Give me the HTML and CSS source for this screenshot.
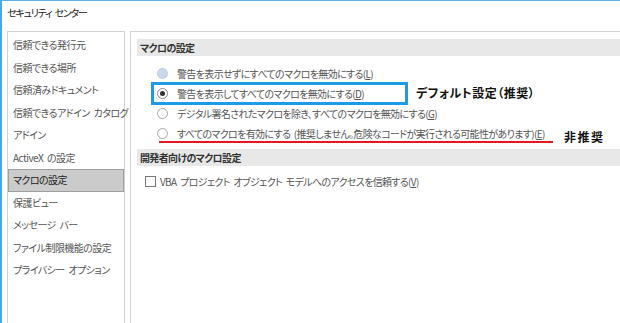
FILE: index.html
```html
<!DOCTYPE html>
<html lang="ja">
<head>
  <meta charset="UTF-8" />
  <title>セキュリティ センター</title>
  <link rel="stylesheet" href="styles.css">
</head>
<body>
  <div class="window">
    <div class="title">セキュリティ センター</div>
    <div class="content">
      <ul class="nav">
        <li>信頼できる発行元</li>
        <li>信頼できる場所</li>
        <li>信頼済みドキュメント</li>
        <li>信頼できるアドイン カタログ</li>
        <li>アドイン</li>
        <li>ActiveX の設定</li>
        <li class="selected">マクロの設定</li>
        <li>保護ビュー</li>
        <li>メッセージ バー</li>
        <li>ファイル制限機能の設定</li>
        <li>プライバシー オプション</li>
      </ul>
      <div class="main">
        <div class="section-head">マクロの設定</div>
        <div class="options">
          <div class="option"><span class="radio disabled"></span><span>警告を表示せずにすべてのマクロを無効にする(<u>L</u>)</span></div>
          <div class="option"><span class="radio checked"></span><span>警告を表示してすべてのマクロを無効にする(<u>D</u>)</span></div>
          <div class="option"><span class="radio"></span><span>デジタル署名されたマクロを除き、すべてのマクロを無効にする(<u>G</u>)</span></div>
          <div class="option"><span class="radio"></span><span>すべてのマクロを有効にする (推奨しません。危険なコードが実行される可能性があります)(<u>E</u>)</span></div>
        </div>
        <div class="section-head second">開発者向けのマクロ設定</div>
        <div class="check-row"><span class="checkbox"></span><span>VBA プロジェクト オブジェクト モデルへのアクセスを信頼する(<u>V</u>)</span></div>

        <!-- annotations -->
        <div class="mark-box"></div>
        <div class="note note-default">デフォルト設定（推奨）</div>
        <div class="mark-line"></div>
        <div class="note note-bad">非推奨</div>
      </div>
    </div>
  </div>
</body>
</html>
```

FILE: styles.css
```css
* {
  box-sizing: border-box;
}
body, html {
  margin: 0;
  padding: 0;
  overflow: hidden;
  height: 100%;
  font-family: "Noto Sans CJK JP", "Noto Sans", sans-serif;
  font-feature-settings: "palt";
  font-size: 10px;
  letter-spacing: -0.65px;
  word-spacing: 2px;
}
.window {
  height: 323px;
  background: #fff;
  border-top: 1px solid #62afe6;
  border-left: 2px solid #4ea6e4;
  display: flex;
  flex-direction: column;
  overflow: hidden;
}
.title {
  height: 30px;
  line-height: 24px;
  padding-left: 5px;
  color: #222;
  letter-spacing: -1.2px;
  flex: none;
}
.content {
  flex: 1;
  display: flex;
  gap: 5px;
  padding-left: 5px;
}
.nav {
  width: 118px;
  margin: 0;
  padding: 2px 0 0;
  list-style: none;
  border: 1px solid #d2d2d2;
  border-bottom: none;
  color: #555;
  letter-spacing: -0.55px;
}
.nav li {
  height: 22.5px;
  line-height: 22.5px;
  padding-left: 5px;
  white-space: nowrap;
}
.nav li.selected {
  background: #cbcbcb;
  border: 1px solid #9e9e9e;
  line-height: 20.5px;
  padding-left: 4px;
  color: #222;
}
.main {
  flex: 1;
  position: relative;
  border-left: 1px solid #d2d2d2;
  border-top: 1px solid #d2d2d2;
  padding: 7px 0 0 6px;
}
.section-head {
  height: 17px;
  line-height: 17px;
  background: #e8e8e8;
  padding-left: 3px;
  font-weight: bold;
  color: #333;
}
.section-head.second {
  margin-top: 6px;
}
.options {
  margin-top: 7px;
}
.option {
  height: 20px;
  display: flex;
  align-items: center;
  gap: 9px;
  padding-left: 20px;
  color: #555;
  white-space: nowrap;
}
.radio {
  width: 11px;
  height: 11px;
  border-radius: 50%;
  border: 1px solid #a8a8a8;
  background: #fff;
  flex: none;
  display: flex;
  align-items: center;
  justify-content: center;
}
.radio.disabled {
  background: #c9d7ea;
  border-color: #bccbe0;
}
.radio.checked {
  border-color: #8a8a8a;
}
.radio.checked::after {
  content: "";
  width: 5px;
  height: 5px;
  border-radius: 50%;
  background: #333;
}
.check-row {
  margin-top: 5px;
  height: 20px;
  display: flex;
  align-items: center;
  gap: 4px;
  padding-left: 8px;
  color: #555;
  white-space: nowrap;
}
.checkbox {
  width: 11px;
  height: 11px;
  border: 1px solid #777;
  background: #fff;
  flex: none;
}
.mark-box {
  position: absolute;
  left: 20px;
  top: 50px;
  width: 257px;
  height: 23px;
  border: 3px solid #1e9be6;
}
.mark-line {
  position: absolute;
  left: 28px;
  top: 109px;
  width: 394px;
  height: 2px;
  background: #e8141e;
}
.note {
  position: absolute;
  font-size: 12px;
  font-weight: bold;
  color: #111;
  letter-spacing: 0.5px;
  word-spacing: 0;
  white-space: nowrap;
  line-height: 16px;
}
.note-default {
  left: 285px;
  top: 53px;
}
.note-bad {
  left: 433px;
  top: 97px;
  letter-spacing: 1.5px;
}
```
